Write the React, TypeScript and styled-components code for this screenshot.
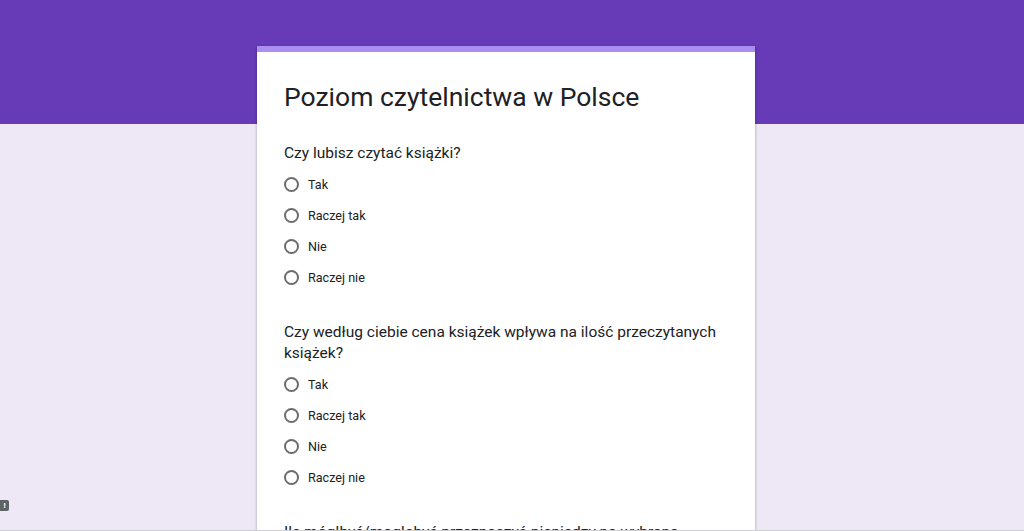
import styled, { createGlobalStyle } from 'styled-components'

const GlobalStyle = createGlobalStyle`
    html, body {
        margin: 0;
        padding: 0;
        background: #ede7f6;
        font-family: Roboto, "Noto Sans", Arial, sans-serif;
    }
`

const Page = styled.div`
    min-height: 100vh;
    background: linear-gradient(#673ab7 0, #673ab7 124px, #ede7f6 124px);
    padding-top: 46px;
    overflow: hidden;
`

const Card = styled.div`
    width: 498px;
    margin-left: calc(50% - 255px);
    background: #fff;
    border-top: 6px solid #ab8ff0;
    box-shadow: 0 1px 3px rgba(0, 0, 0, 0.3);
    padding: 29px 27px 40px;
    box-sizing: border-box;
`

const Title = styled.h1`
    margin: 0;
    font-size: 26.5px;
    line-height: 32px;
    font-weight: 400;
    color: #202124;
`

const Question = styled.div`
    margin-top: ${(p: { $first?: boolean }) => (p.$first ? '30px' : '29px')};
`

const QuestionText = styled.div`
    font-size: 15.5px;
    line-height: 21px;
    color: #202124;
    margin-bottom: 5px;
`

const Option = styled.label`
    display: flex;
    align-items: center;
    height: 31px;
    gap: 9px;
    font-size: 12.6px;
    color: #202124;
`

const Radio = styled.span`
    width: 15px;
    height: 15px;
    box-sizing: border-box;
    border: 2px solid #6d6d6d;
    border-radius: 50%;
`

const Badge = styled.div`
    position: fixed;
    left: 0;
    top: 500px;
    width: 9px;
    height: 11px;
    background: #5f6368;
    border-radius: 0 2px 2px 0;
    color: #fff;
    font-size: 8px;
    line-height: 11px;
    text-align: center;
    font-weight: 700;
`

const BottomLine = styled.div`
    position: fixed;
    left: 0;
    right: 0;
    bottom: 0;
    height: 1px;
    background: #cfcfd4;
`

const answers = ['Tak', 'Raczej tak', 'Nie', 'Raczej nie']

const questions = [
    'Czy lubisz czytać książki?',
    'Czy według ciebie cena książek wpływa na ilość przeczytanych książek?',
    'Ile mógłbyś/mogłabyś przeznaczyć pieniędzy na wybraną książkę?',
]

const App = () => {
    return (
        <Page>
            <GlobalStyle />
            <Card>
                <Title>Poziom czytelnictwa w Polsce</Title>
                {questions.map((q, i) => (
                    <Question key={q} $first={i === 0}>
                        <QuestionText>{q}</QuestionText>
                        {answers.map(a => (
                            <Option key={a}>
                                <Radio />
                                {a}
                            </Option>
                        ))}
                    </Question>
                ))}
            </Card>
            <Badge>!</Badge>
            <BottomLine />
        </Page>
    )
}

export default App
